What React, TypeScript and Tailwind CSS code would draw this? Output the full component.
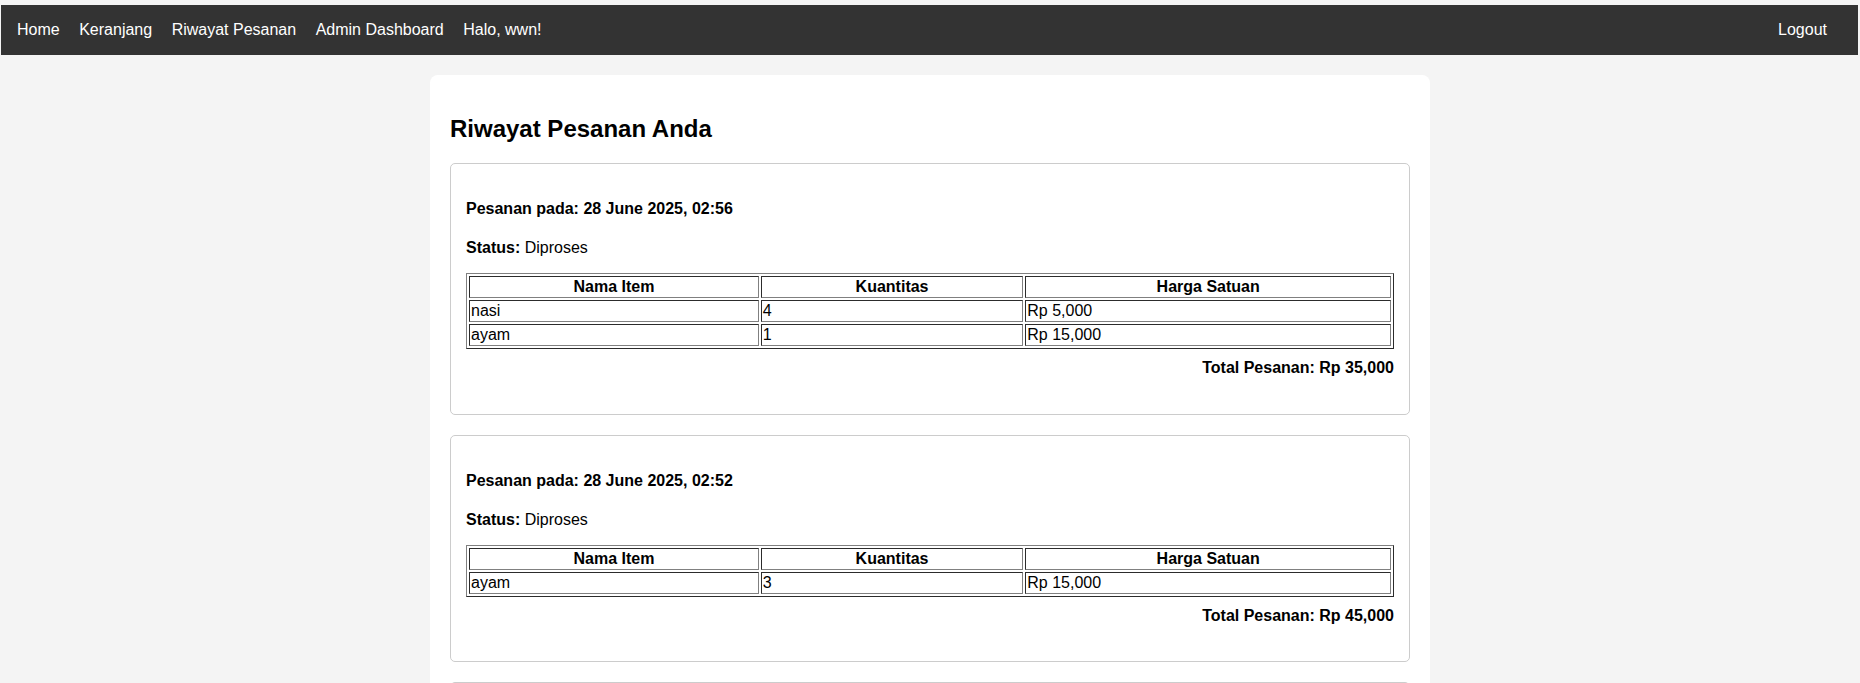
const orders = [
    {
        date: "28 June 2025, 02:56",
        status: "Diproses",
        items: [
            { name: "nasi", qty: 4, price: "Rp 5,000" },
            { name: "ayam", qty: 1, price: "Rp 15,000" },
        ],
        total: "Rp 35,000",
    },
    {
        date: "28 June 2025, 02:52",
        status: "Diproses",
        items: [{ name: "ayam", qty: 3, price: "Rp 15,000" }],
        total: "Rp 45,000",
    },
    {
        date: "28 June 2025, 02:41",
        status: "Diproses",
        items: [{ name: "nasi", qty: 2, price: "Rp 5,000" }],
        total: "Rp 10,000",
    },
];

const cellBorder = "border border-t-[#2c2c2c] border-l-[#2c2c2c] border-r-[#808080] border-b-[#808080] p-[1px]";

const OrderCard = ({ order }: { order: (typeof orders)[number] }) => (
    <div className="border border-[#cccccc] rounded-[5px] p-[15px] mb-5">
        <h4 className="text-[16px] font-bold my-[21.28px]">Pesanan pada: {order.date}</h4>
        <p className="mt-[21.28px] mb-4">
            <strong className="font-bold">Status:</strong> {order.status}
        </p>
        <table className="w-full border-separate border-spacing-[2px] border border-t-[#808080] border-l-[#808080] border-r-[#2c2c2c] border-b-[#2c2c2c]">
            <thead>
                <tr>
                    <th className={`${cellBorder} font-bold text-center`}>Nama Item</th>
                    <th className={`${cellBorder} font-bold text-center`}>Kuantitas</th>
                    <th className={`${cellBorder} font-bold text-center`}>Harga Satuan</th>
                </tr>
            </thead>
            <tbody>
                {order.items.map((item, index) => (
                    <tr key={index}>
                        <td className={`${cellBorder} text-left`}>{item.name}</td>
                        <td className={`${cellBorder} text-left`}>{item.qty}</td>
                        <td className={`${cellBorder} text-left`}>{item.price}</td>
                    </tr>
                ))}
            </tbody>
        </table>
        <h4 className="text-[16px] font-bold text-right mt-[10px] mb-[21.28px]">Total Pesanan: {order.total}</h4>
    </div>
);

export default function App() {
    return (
        <div className="min-h-screen bg-[#f4f4f4] text-black text-[16px] leading-[normal] pt-[5px] font-['Liberation_Sans',Arial,sans-serif]">
            <nav className="ml-[1px] mr-[2px] h-[50px] bg-[#333333] flex items-center justify-between pl-[16px] pr-[31px] text-white">
                <div className="flex items-center gap-[19.5px]">
                    <a href="#">Home</a>
                    <a href="#">Keranjang</a>
                    <a href="#">Riwayat Pesanan</a>
                    <a href="#">Admin Dashboard</a>
                    <span>Halo, wwn!</span>
                </div>
                <a href="#">Logout</a>
            </nav>
            <div className="max-w-[1000px] mx-auto mt-5 bg-white rounded-lg p-5">
                <h2 className="text-[24px] font-bold my-[19.92px]">Riwayat Pesanan Anda</h2>
                {orders.map((order, index) => (
                    <OrderCard key={index} order={order} />
                ))}
            </div>
        </div>
    );
}
